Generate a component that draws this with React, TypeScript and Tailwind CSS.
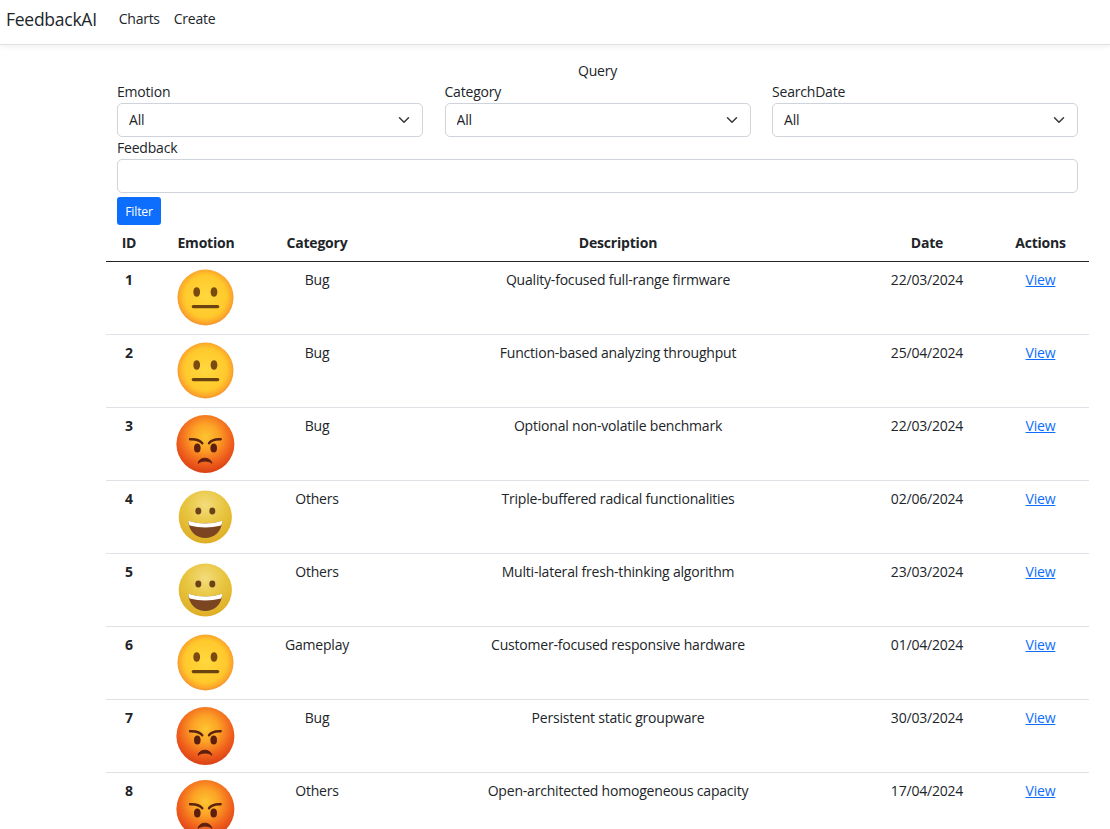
import React from 'react';

type Emotion = 'neutral' | 'angry' | 'happy';

const rows: { id: number; emotion: Emotion; category: string; description: string; date: string }[] = [
  { id: 1, emotion: 'neutral', category: 'Bug', description: 'Quality-focused full-range firmware', date: '22/03/2024' },
  { id: 2, emotion: 'neutral', category: 'Bug', description: 'Function-based analyzing throughput', date: '25/04/2024' },
  { id: 3, emotion: 'angry', category: 'Bug', description: 'Optional non-volatile benchmark', date: '22/03/2024' },
  { id: 4, emotion: 'happy', category: 'Others', description: 'Triple-buffered radical functionalities', date: '02/06/2024' },
  { id: 5, emotion: 'happy', category: 'Others', description: 'Multi-lateral fresh-thinking algorithm', date: '23/03/2024' },
  { id: 6, emotion: 'neutral', category: 'Gameplay', description: 'Customer-focused responsive hardware', date: '01/04/2024' },
  { id: 7, emotion: 'angry', category: 'Bug', description: 'Persistent static groupware', date: '30/03/2024' },
  { id: 8, emotion: 'angry', category: 'Others', description: 'Open-architected homogeneous capacity', date: '17/04/2024' },
];

const EmotionIcon: React.FC<{ emotion: Emotion; uid: number }> = ({ emotion, uid }) => {
  const gid = `face-${uid}`;
  if (emotion === 'neutral') {
    return (
      <svg width="60" height="60" viewBox="0 0 60 60" className="inline-block align-middle">
        <defs>
          <radialGradient id={gid} cx="50%" cy="48%" r="52%">
            <stop offset="0%" stopColor="#ffd83d" />
            <stop offset="72%" stopColor="#ffc92c" />
            <stop offset="90%" stopColor="#fda92a" />
            <stop offset="100%" stopColor="#f2932e" />
          </radialGradient>
        </defs>
        <circle cx="29.5" cy="29.5" r="28" fill={`url(#${gid})`} />
        <ellipse cx="20.7" cy="24" rx="3.4" ry="4.8" fill="#7a4a12" />
        <ellipse cx="38" cy="24" rx="3.4" ry="4.8" fill="#7a4a12" />
        <rect x="15.7" y="37" width="27.6" height="3.2" rx="1.6" fill="#6b4310" />
      </svg>
    );
  }
  if (emotion === 'angry') {
    return (
      <svg width="60" height="60" viewBox="0 0 60 60" className="inline-block align-middle">
        <defs>
          <radialGradient id={gid} cx="50%" cy="38%" r="64%">
            <stop offset="0%" stopColor="#fdc531" />
            <stop offset="35%" stopColor="#fca326" />
            <stop offset="72%" stopColor="#f0601c" />
            <stop offset="100%" stopColor="#d63c14" />
          </radialGradient>
        </defs>
        <circle cx="29.4" cy="30" r="29" fill={`url(#${gid})`} />
        <path d="M14 25.3 C19 25 24 26.5 26.3 29.3" fill="none" stroke="#5a2410" strokeWidth="2.4" strokeLinecap="round" />
        <path d="M44.7 25.3 C39.7 25 35 26.5 33 29.3" fill="none" stroke="#5a2410" strokeWidth="2.4" strokeLinecap="round" />
        <ellipse cx="21.3" cy="34" rx="3.3" ry="4.6" fill="#5f1f10" />
        <ellipse cx="37.7" cy="34" rx="3.3" ry="4.6" fill="#5f1f10" />
        <path d="M22 49.3 C23.5 42.5 34 42.5 36 49.3 C32.5 46.3 26 46.3 22 49.3 Z" fill="#5f1f10" stroke="#5f1f10" strokeWidth="1" strokeLinejoin="round" />
      </svg>
    );
  }
  return (
    <svg width="60" height="60" viewBox="0 0 60 60" className="inline-block align-middle">
      <defs>
        <radialGradient id={gid} cx="50%" cy="28%" r="74%">
          <stop offset="0%" stopColor="#f3dc7c" />
          <stop offset="50%" stopColor="#e8c53f" />
          <stop offset="100%" stopColor="#dfab24" />
        </radialGradient>
      </defs>
      <circle cx="29.3" cy="30" r="26.6" fill={`url(#${gid})`} />
      <ellipse cx="22.3" cy="24" rx="3" ry="3.4" fill="#6b4218" />
      <ellipse cx="36.3" cy="24" rx="3" ry="3.4" fill="#6b4218" />
      <path d="M12.3 33.7 Q29.3 39.5 46.3 33.7 C46 44.5 38 51 29.3 51 C20.5 51 12.6 44.5 12.3 33.7 Z" fill="#7a4520" />
      <path d="M12.3 33.7 Q29.3 39.5 46.3 33.7 C46.2 35.6 45.8 37.2 45 38.6 Q29.3 42.6 13.6 38.6 C12.8 37.2 12.4 35.6 12.3 33.7 Z" fill="#ffffff" />
    </svg>
  );
};

const SelectField: React.FC<{ label: string }> = ({ label }) => (
  <div className="flex-1">
    <label className="block pb-px">{label}</label>
    <div className="relative">
      <select className="block h-[34px] w-full appearance-none rounded-[5px] border border-[#ced4da] bg-white pb-[2px] pl-[11px] pr-[32px] text-[14px] text-[#212529]">
        <option>All</option>
      </select>
      <svg viewBox="0 0 16 16" className="pointer-events-none absolute right-[11px] top-[11px] h-[12px] w-[16px]">
        <path d="m2 5 6 6 6-6" fill="none" stroke="#343a40" strokeWidth="2" strokeLinecap="round" strokeLinejoin="round" />
      </svg>
    </div>
  </div>
);

const App: React.FC = () => {
  return (
    <div className="h-screen overflow-hidden bg-white font-['Open_Sans',sans-serif] text-[14px] leading-[21px] tracking-[-0.2px] text-[#212529]">
      {/* Navbar */}
      <nav className="flex h-[45px] items-center border-b border-[#dee2e6] bg-white pb-[8px] pl-[6px] shadow-[0_2px_5px_rgba(0,0,0,0.06)]">
        <a className="mr-[15px] mt-[2px] text-[17.5px] tracking-[-0.26px]">FeedbackAI</a>
        <a className="px-[7px] tracking-[-0.26px]">Charts</a>
        <a className="px-[7px] tracking-[-0.26px]">Create</a>
      </nav>

      <main className="ml-[106px] w-[983px] pt-[15px]">
        {/* Query form */}
        <div className="text-center">Query</div>
        <div className="flex gap-[21.5px] px-[11px]">
          <SelectField label="Emotion" />
          <SelectField label="Category" />
          <SelectField label="SearchDate" />
        </div>
        <div className="px-[11px]">
          <label className="block pb-px">Feedback</label>
          <input className="block h-[34px] w-full rounded-[5px] border border-[#ced4da] bg-white" />
          <button className="mt-[4px] block h-[28px] w-[44px] rounded-[3px] bg-[#0d6efd] text-[12.25px] text-white">Filter</button>
        </div>

        {/* Results */}
        <table className="mt-px w-full table-fixed border-collapse text-center">
          <colgroup>
            <col className="w-[46px]" />
            <col className="w-[108px]" />
            <col className="w-[114px]" />
            <col />
            <col className="w-[130px]" />
            <col className="w-[97px]" />
          </colgroup>
          <thead>
            <tr className="border-b border-[#212529]">
              {['ID', 'Emotion', 'Category', 'Description', 'Date', 'Actions'].map((h) => (
                <th key={h} className="px-[7px] pb-[8px] pt-[6px] font-bold">{h}</th>
              ))}
            </tr>
          </thead>
          <tbody>
            {rows.map((row) => (
              <tr key={row.id} className="h-[73px] border-b border-[#dee2e6]">
                <td className="p-[7px] align-top font-bold">{row.id}</td>
                <td className="px-[7px] pb-0 pt-[6px] align-top">
                  <EmotionIcon emotion={row.emotion} uid={row.id} />
                </td>
                <td className="p-[7px] align-top">{row.category}</td>
                <td className="p-[7px] align-top">{row.description}</td>
                <td className="p-[7px] align-top">{row.date}</td>
                <td className="p-[7px] align-top">
                  <a className="text-[#0d6efd] underline">View</a>
                </td>
              </tr>
            ))}
          </tbody>
        </table>
      </main>
    </div>
  );
};

export default App;
